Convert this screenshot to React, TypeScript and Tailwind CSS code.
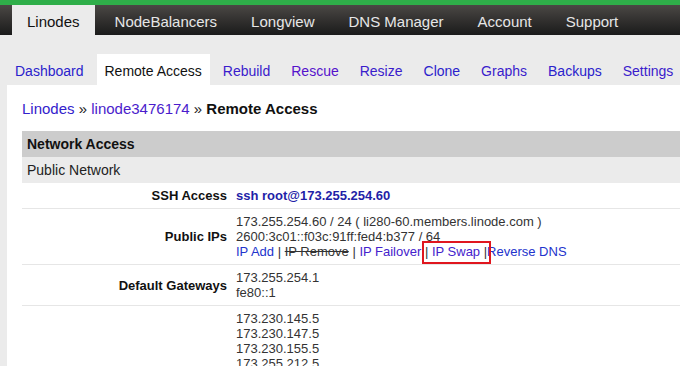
import React from "react";

const mainNav = ["Linodes", "NodeBalancers", "Longview", "DNS Manager", "Account", "Support"];

const subNav: { label: string; color: string }[] = [
    { label: "Dashboard", color: "text-[#2a22cc]" },
    { label: "Remote Access", color: "text-[#111]" },
    { label: "Rebuild", color: "text-[#3a1ccc]" },
    { label: "Rescue", color: "text-[#5512cc]" },
    { label: "Resize", color: "text-[#3a1ccc]" },
    { label: "Clone", color: "text-[#2a22cc]" },
    { label: "Graphs", color: "text-[#3a1ccc]" },
    { label: "Backups", color: "text-[#2a22cc]" },
    { label: "Settings", color: "text-[#3a1ccc]" },
];

const resolvers = [
    "173.230.145.5",
    "173.230.147.5",
    "173.230.155.5",
    "173.255.212.5",
    "173.255.219.5",
    "2600:3c01::2",
    "2600:3c01::3",
    "2600:3c01::4",
    "2600:3c01::5",
    "2600:3c01::6",
];

function Row({ label, children }: { label: string; children: React.ReactNode }) {
    return (
        <tr className="border-b border-[#e6e6e6]">
            <td className="w-[210px] py-[5px] pr-[5px] text-right align-middle font-bold text-[#111]">{label}</td>
            <td className="py-[5px] pl-[4px] align-middle">{children}</td>
        </tr>
    );
}

export default function App() {
    return (
        <div className="min-h-[366px] bg-[#ebebeb] font-['Liberation_Sans',Arial,sans-serif] text-[#333]">
            <div className="h-[5px] bg-[#2fae49]" />

            {/* main nav */}
            <div className="flex h-[30px] bg-linear-to-b from-[#4b4845] to-[#1b1b1b] pl-[12px] text-[15px] leading-[17px] whitespace-nowrap">
                {mainNav.map((item, i) => (
                    <div
                        key={item}
                        className={
                            i === 0
                                ? "shrink-0 bg-[#ebebeb] px-[15px] pt-[8px] text-[#111]"
                                : i === 1
                                    ? "shrink-0 pl-[20px] pr-[17px] pt-[8px] text-[#e6e6e6]"
                                    : "shrink-0 px-[17px] pt-[8px] text-[#e6e6e6]"
                        }
                    >
                        {item}
                    </div>
                ))}
            </div>

            {/* sub nav */}
            <div className="flex h-[50px] items-end gap-[5px] pl-[7px] text-[14px] leading-[16px] whitespace-nowrap">
                {subNav.map((t) => (
                    <div
                        key={t.label}
                        className={`h-[31px] shrink-0 px-[8px] pt-[9px] ${t.color} ${t.label === "Remote Access" ? "bg-white" : ""}`}
                    >
                        {t.label}
                    </div>
                ))}
            </div>

            {/* content */}
            <div className="ml-[7px] bg-white pl-[15px] pt-[15px]">
                <div className="text-[15px] leading-[17px]">
                    <span className="text-[#3322cc]">Linodes</span>
                    <span className="text-[#222]"> » </span>
                    <span className="text-[#4a1ccc]">linode3476174</span>
                    <span className="text-[#222]"> » </span>
                    <span className="font-bold text-[#111]">Remote Access</span>
                </div>

                <table className="mt-[14px] w-full border-collapse text-[13px] leading-[15px]">
                    <tbody>
                        <tr className="bg-[#cccccc]">
                            <td colSpan={2} className="pb-[5px] pl-[5px] pt-[6px] text-[14px] font-bold text-[#111]">Network Access</td>
                        </tr>
                        <tr className="bg-[#ebebeb]">
                            <td colSpan={2} className="pb-[5px] pl-[5px] pt-[6px] text-[14px] text-[#222]">Public Network</td>
                        </tr>
                        <Row label="SSH Access">
                            <span className="font-bold text-[#1f1fa8]">ssh root@173.255.254.60</span>
                        </Row>
                        <Row label="Public IPs">
                            <div>173.255.254.60 / 24 ( li280-60.members.linode.com )</div>
                            <div>2600:3c01::f03c:91ff:fed4:b377 / 64</div>
                            <div>
                                <span className="text-[#2233cc]">IP Add</span>
                                {" | "}
                                <span className="line-through">IP Remove</span>
                                {" | "}
                                <span className="text-[#4422cc]">IP Failover</span>{" "}
                                <span className="relative">
                                    | <span className="text-[#4422cc]">IP Swap</span> |
                                    <span className="pointer-events-none absolute -bottom-[5px] -left-[3px] -right-[4px] -top-[3px] border-2 border-[#e0161e]" />
                                </span>
                                <span className="text-[#2233cc]">Reverse DNS</span>
                            </div>
                        </Row>
                        <Row label="Default Gateways">
                            <div>173.255.254.1</div>
                            <div>fe80::1</div>
                        </Row>
                        <Row label="DNS Resolvers">
                            {resolvers.map((r) => (
                                <div key={r}>{r}</div>
                            ))}
                        </Row>
                    </tbody>
                </table>
            </div>
        </div>
    );
}
